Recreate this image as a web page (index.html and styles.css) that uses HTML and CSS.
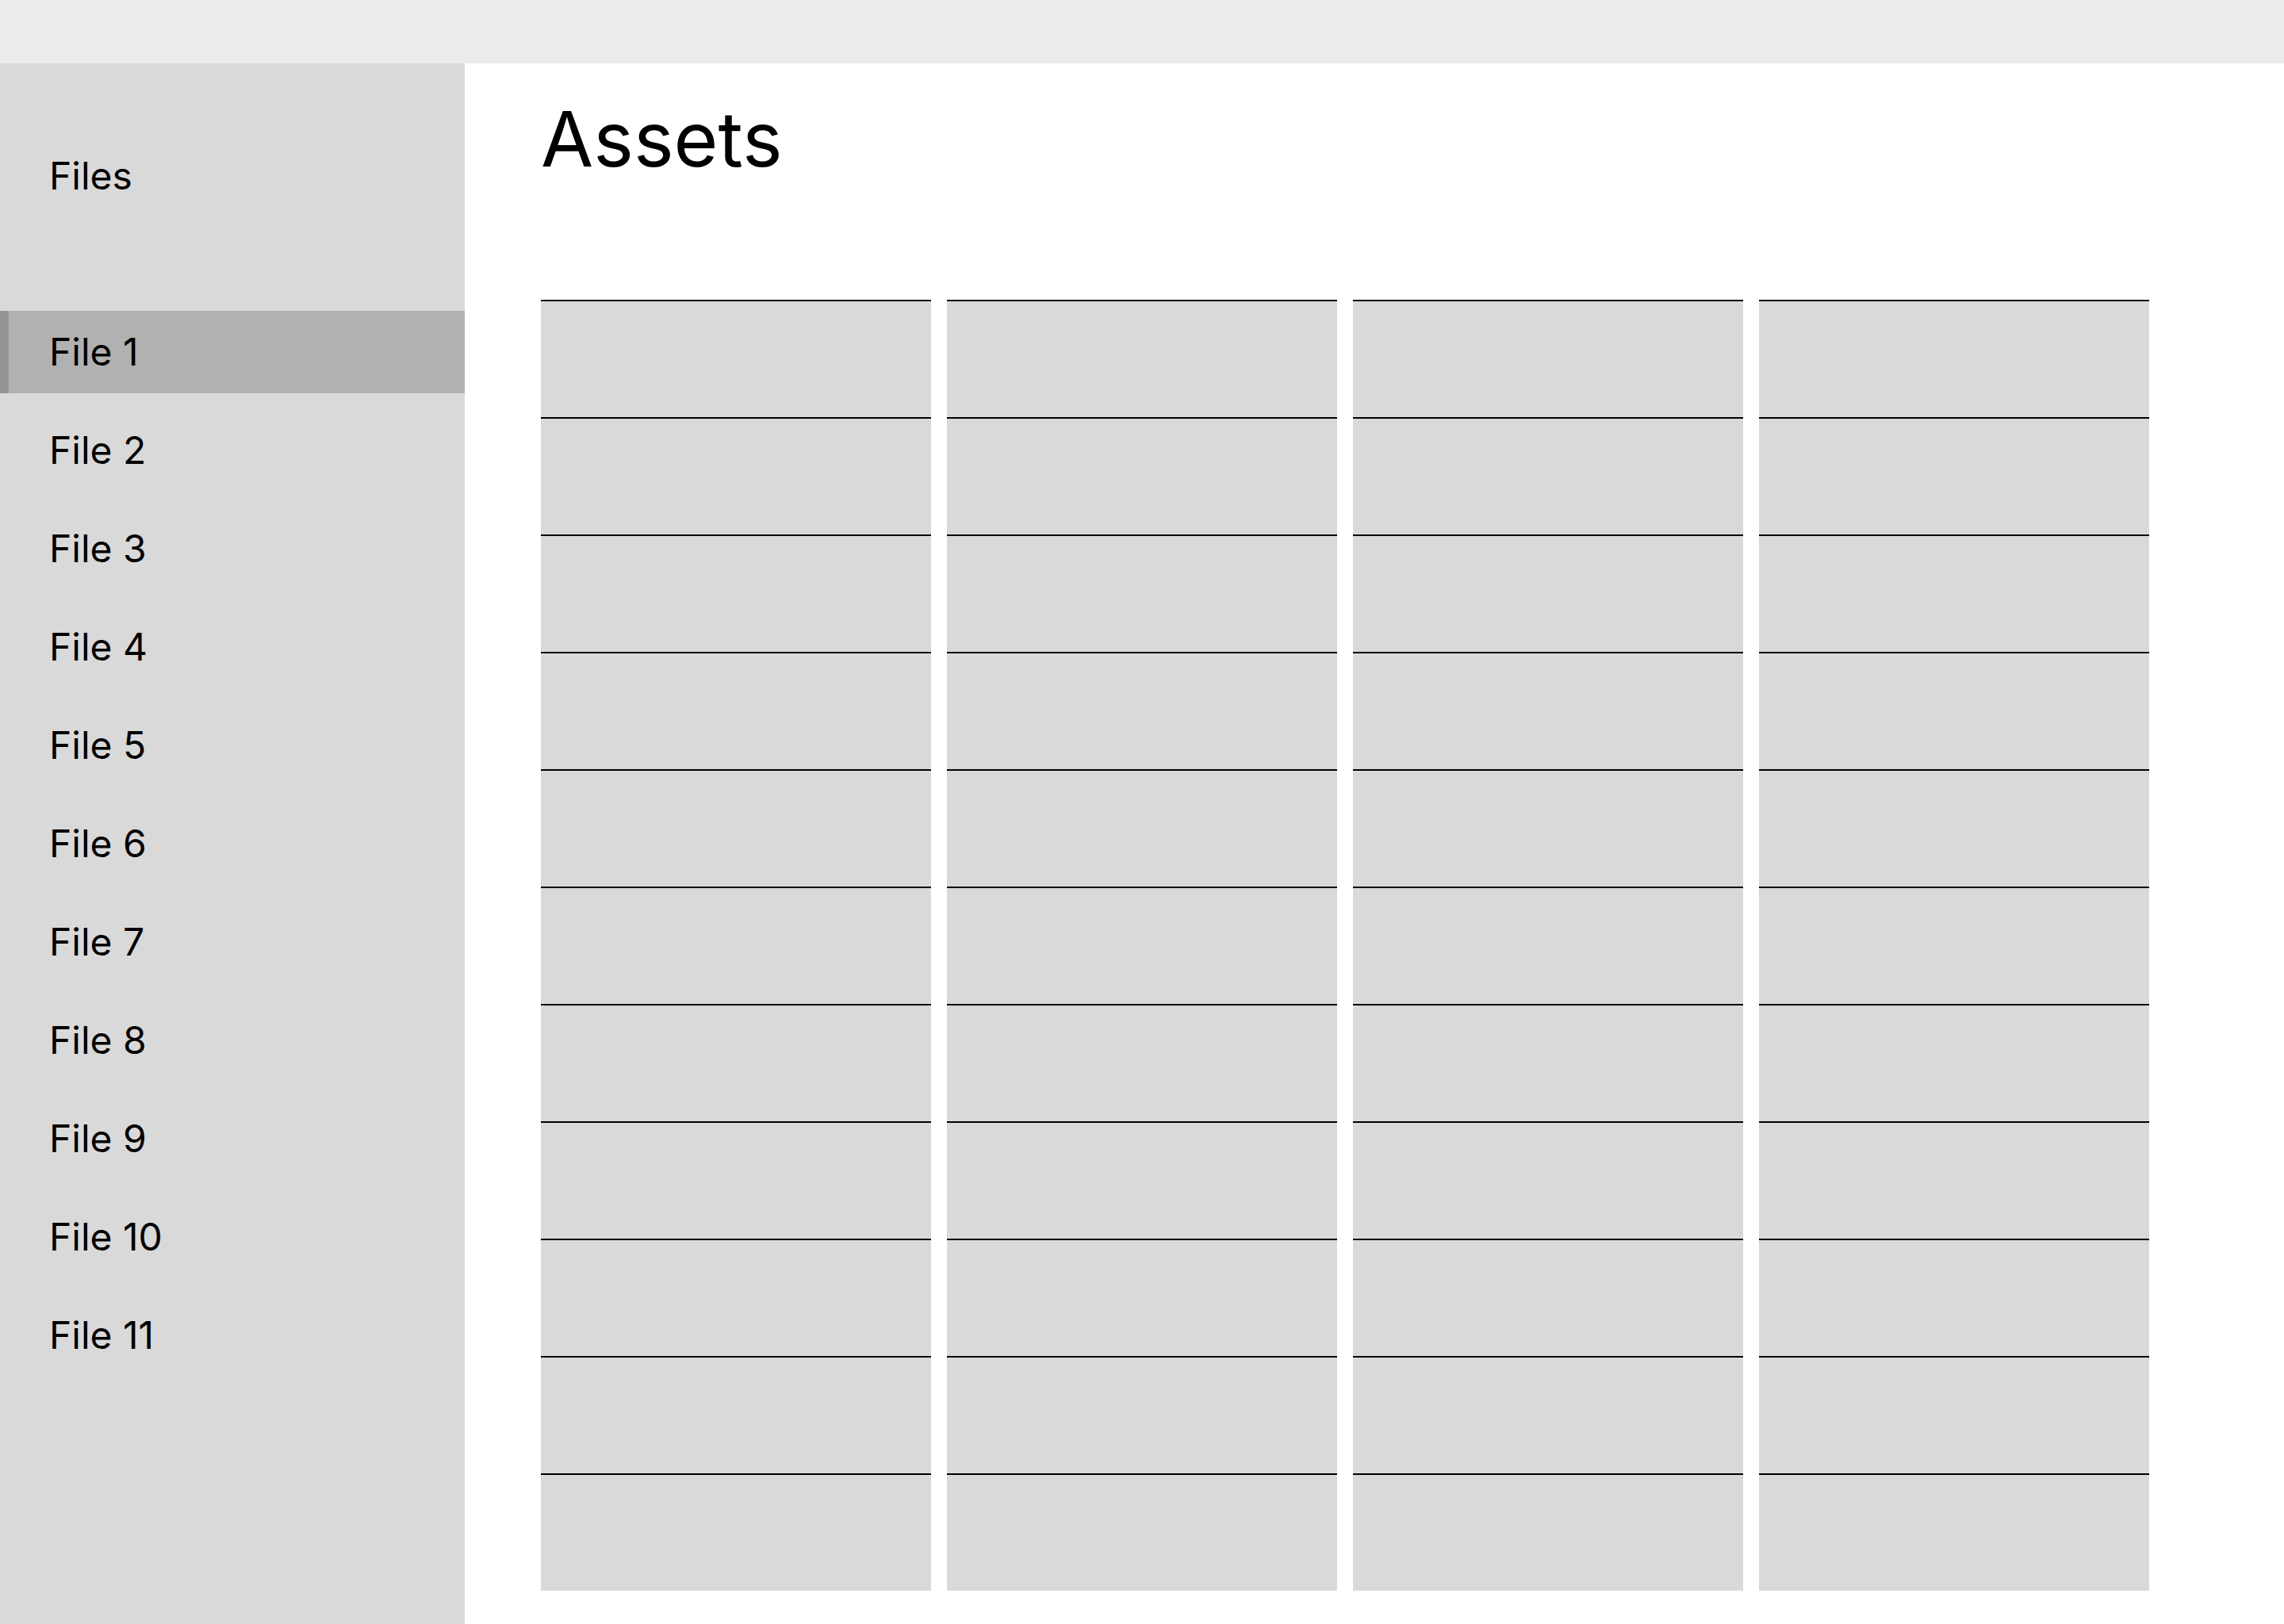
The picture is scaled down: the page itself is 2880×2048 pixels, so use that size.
FILE: index.html
```html
<!DOCTYPE html>
<html lang="en">
<head>
    <meta charset="UTF-8">
    <meta name="viewport" content="width=device-width, initial-scale=1.0">
    <title>Assets</title>
    <link rel="stylesheet" href="styles.css">
</head>
<body>

<div class="topbar"></div>

<div class="layout">
    <aside class="sidebar">
        <div class="sidebar-title">Files</div>
        <ul class="file-list">
            <li class="file-item active">File 1</li>
            <li class="file-item">File 2</li>
            <li class="file-item">File 3</li>
            <li class="file-item">File 4</li>
            <li class="file-item">File 5</li>
            <li class="file-item">File 6</li>
            <li class="file-item">File 7</li>
            <li class="file-item">File 8</li>
            <li class="file-item">File 9</li>
            <li class="file-item">File 10</li>
            <li class="file-item">File 11</li>
        </ul>
    </aside>

    <main class="main">
        <h1>Assets</h1>
        <div class="asset-grid" id="asset-grid"></div>
    </main>
</div>

<script>
    // 11 filas x 4 columnas de celdas vacias
    const grid = document.getElementById('asset-grid');
    for (let i = 0; i < 44; i++) {
        const cell = document.createElement('div');
        cell.className = 'asset-cell';
        grid.appendChild(cell);
    }
</script>
</body>
</html>
```

FILE: styles.css
```css
* {
    box-sizing: border-box;
}
html, body {
    height: 100%;
}
body {
    font-family: Inter, "Noto Sans", Arial, sans-serif;
    background-color: #ffffff;
    color: #000;
    margin: 0;
    display: flex;
    flex-direction: column;
    overflow: hidden;
}
.topbar {
    height: 80px;
    flex-shrink: 0;
    background-color: #ebebeb;
}
.layout {
    flex: 1;
    display: flex;
}
.sidebar {
    width: 586px;
    flex-shrink: 0;
    background-color: #d9d9d9;
    padding-top: 90px;
}
.sidebar-title {
    height: 104px;
    display: flex;
    align-items: center;
    padding-left: 62px;
    font-size: 48px;
    line-height: 48px;
    margin-bottom: 118px;
}
.file-list {
    list-style: none;
    margin: 0;
    padding: 0;
    display: flex;
    flex-direction: column;
    gap: 20px;
}
.file-item {
    height: 104px;
    display: flex;
    align-items: center;
    padding-left: 62px;
    font-size: 48px;
    line-height: 48px;
}
.file-item.active {
    background-color: #b1b1b1;
    border-left: 11px solid #959595;
    padding-left: 51px;
}
.main {
    flex: 1;
    padding: 47px 0 0 96px;
}
h1 {
    margin: 0;
    font-size: 96px;
    line-height: 96px;
    font-weight: 400;
}
.asset-grid {
    margin-top: 155px;
    display: grid;
    grid-template-columns: repeat(4, 492px);
    column-gap: 20px;
}
.asset-cell {
    height: 148px;
    background-color: #d9d9d9;
    border-top: 2px solid #000;
}
```
